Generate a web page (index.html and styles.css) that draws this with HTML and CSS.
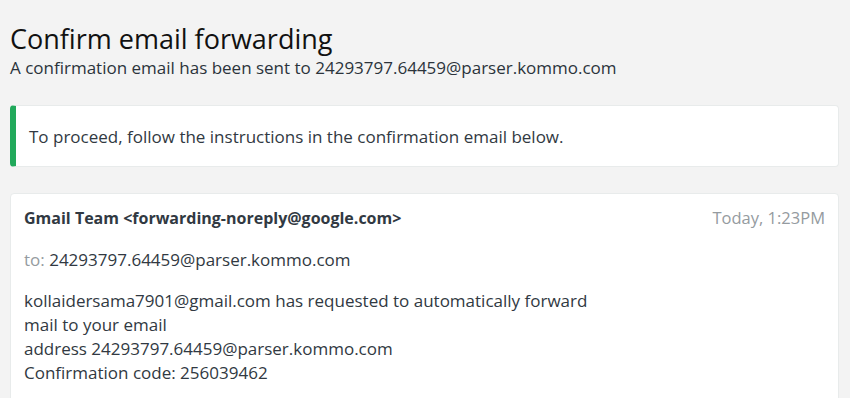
FILE: index.html
```html
<!DOCTYPE html>
<html>
<head>
<meta charset="utf-8">
<link rel="stylesheet" href="styles.css">
</head>
<body>
<div class="page">
  <header class="head">
    <h1 class="title">Confirm email forwarding</h1>
    <p class="subtitle">A confirmation email has been sent to 24293797.64459@parser.kommo.com</p>
  </header>
  <div class="notice">To proceed, follow the instructions in the confirmation email below.</div>
  <div class="mail">
    <div class="mail-head">
      <span class="sender">Gmail Team &lt;forwarding-noreply@google.com&gt;</span>
      <span class="date">Today, 1:23PM</span>
    </div>
    <div class="mail-to"><span class="to-label">to:</span> 24293797.64459@parser.kommo.com</div>
    <div class="mail-body">
      <div>kollaidersama7901@gmail.com has requested to automatically forward</div>
      <div>mail to your email</div>
      <div>address 24293797.64459@parser.kommo.com</div>
      <div>Confirmation code: 256039462</div>
    </div>
  </div>
</div>
</body>
</html>
```
FILE: styles.css
```css
html, body {
  margin: 0;
  padding: 0;
  background: #f3f3f3;
}
body {
  font-family: "Open Sans", "Lato", sans-serif;
  color: #313942;
}
.page {
  padding: 21px 11px 0 10px;
  display: flex;
  flex-direction: column;
}
.head {
  display: flex;
  flex-direction: column;
}
.title {
  margin: 0;
  font-size: 27px;
  font-weight: 400;
  line-height: 36px;
  color: #111;
}
.subtitle {
  margin: 0;
  font-size: 17px;
  line-height: 22px;
  color: #2b333b;
}
.notice {
  margin-top: 26px;
  height: 62px;
  box-sizing: border-box;
  background: #fff;
  border: 1px solid #e8ebeb;
  border-left: 6px solid #21a95b;
  border-radius: 4px;
  padding: 0 13px;
  display: flex;
  align-items: center;
  font-size: 17px;
}
.mail {
  margin-top: 26px;
  background: #fff;
  border: 1px solid #e8ebeb;
  border-radius: 4px;
  padding: 12px 13px 20px 13px;
  height: 260px;
}
.mail-head {
  display: flex;
  justify-content: space-between;
  line-height: 24px;
  font-size: 16px;
}
.sender {
  font-weight: 700;
}
.date {
  color: #959ba0;
  font-size: 16.5px;
}
.mail-to {
  margin-top: 18px;
  line-height: 24px;
  font-size: 17px;
}
.to-label {
  color: #959ba0;
}
.mail-body {
  margin-top: 17px;
  line-height: 24px;
  font-size: 17px;
}
```
